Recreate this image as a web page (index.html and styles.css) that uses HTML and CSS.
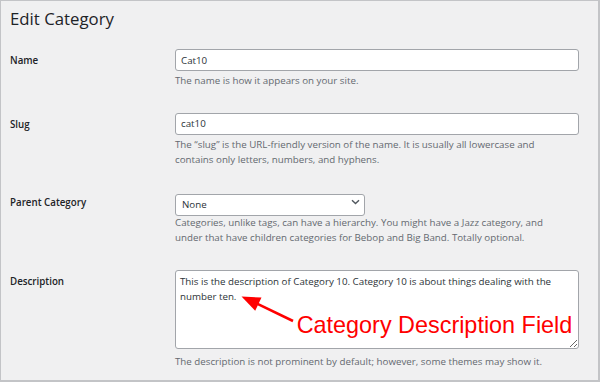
FILE: index.html
```html
<!DOCTYPE html>
<html lang="en">
<head>
<meta charset="utf-8">
<title>Edit Category</title>
<link rel="stylesheet" href="styles.css">
</head>
<body>
<div class="wrap">
  <h1 class="title">Edit Category</h1>
  <div class="form">
    <div class="row">
      <label class="label" for="name">Name</label>
      <div class="field">
        <input class="text" id="name" type="text" value="Cat10">
        <p class="help">The name is how it appears on your site.</p>
      </div>
    </div>
    <div class="row">
      <label class="label" for="slug">Slug</label>
      <div class="field">
        <input class="text" id="slug" type="text" value="cat10">
        <p class="help">The “slug” is the URL-friendly version of the name. It is usually all lowercase and<br>contains only letters, numbers, and hyphens.</p>
      </div>
    </div>
    <div class="row">
      <label class="label" for="parent">Parent Category</label>
      <div class="field">
        <div class="select-wrap">
          <select class="select" id="parent"><option>None</option></select>
          <svg class="chevron" width="9" height="6" viewBox="0 0 9 6"><path d="M1 1.2 L4.5 4.6 L8 1.2" fill="none" stroke="#50575e" stroke-width="1.4"/></svg>
        </div>
        <p class="help">Categories, unlike tags, can have a hierarchy. You might have a Jazz category, and<br>under that have children categories for Bebop and Big Band. Totally optional.</p>
      </div>
    </div>
    <div class="row">
      <label class="label" for="desc">Description</label>
      <div class="field field-desc">
        <textarea class="area" id="desc">This is the description of Category 10. Category 10 is about things dealing with the number ten.</textarea>
        <p class="help help-desc">The description is not prominent by default; however, some themes may show it.</p>
        <svg class="arrow" width="140" height="70" viewBox="0 0 140 70">
          <line x1="118" y1="51" x2="82" y2="33.7" stroke="#ff0000" stroke-width="2.6"/>
          <polygon points="66.5,26.5 86.5,27.6 80.2,40.8" fill="#ff0000"/>
        </svg>
        <span class="note">Category Description Field</span>
      </div>
    </div>
  </div>
</div>
</body>
</html>
```
FILE: styles.css
```css
html, body {
  margin: 0;
  padding: 0;
  background: #f0f0f1;
}
.wrap {
  box-sizing: border-box;
  width: 600px;
  height: 382px;
  border-style: solid;
  border-color: #c3c4c7;
  border-width: 1px 2px 2px 1px;
  background: #f0f0f1;
  padding: 6px 0 0 9px;
  font-family: "Open Sans", "Noto Sans", sans-serif;
  color: #1d2327;
  overflow: hidden;
}
.title {
  margin: 0 0 18px 0;
  font-size: 16.8px;
  line-height: 24px;
  font-weight: 400;
  color: #1d2327;
}
.form {
  display: flex;
  flex-direction: column;
  gap: 24.5px;
}
.row {
  display: grid;
  grid-template-columns: 165px 404px;
}
.label {
  font-size: 9.75px;
  line-height: 15px;
  font-weight: 600;
  padding-top: 4px;
  color: #1d2327;
}
.field {
  display: flex;
  flex-direction: column;
  align-items: flex-start;
}
.field-desc {
  position: relative;
}
.text {
  box-sizing: border-box;
  width: 404px;
  height: 22px;
  margin: 0;
  padding: 0 5px;
  border: 1px solid #a2a5aa;
  border-radius: 3px;
  background: #fff;
  font-family: inherit;
  font-size: 9.75px;
  color: #2c3338;
  outline: none;
}
.select-wrap {
  position: relative;
  width: 190px;
  height: 22px;
}
.select {
  box-sizing: border-box;
  width: 190px;
  height: 22px;
  margin: 0;
  padding: 0 18px 0 6px;
  border: 1px solid #a2a5aa;
  border-radius: 3px;
  background: #fff;
  font-family: inherit;
  font-size: 9.75px;
  color: #2c3338;
  -webkit-appearance: none;
  appearance: none;
  outline: none;
}
.chevron {
  position: absolute;
  right: 5px;
  top: 8px;
}
.help {
  margin: 2px 0 0 0;
  font-size: 9.75px;
  line-height: 15px;
  color: #646970;
}
.help-desc {
  margin-top: 5px;
}
.area {
  box-sizing: border-box;
  width: 404px;
  height: 79.5px;
  margin: 0;
  padding: 3px 4px;
  border: 1px solid #a2a5aa;
  border-radius: 3px;
  background: #fff;
  font-family: inherit;
  font-size: 9.75px;
  line-height: 15px;
  color: #2c3338;
  resize: both;
  outline: none;
}
.arrow {
  position: absolute;
  left: 0;
  top: 0;
}
.note {
  position: absolute;
  left: 121.7px;
  top: 44.7px;
  font-family: "Liberation Sans", Arial, sans-serif;
  font-size: 23.4px;
  line-height: 23.4px;
  color: #ff0000;
  white-space: nowrap;
}
```
